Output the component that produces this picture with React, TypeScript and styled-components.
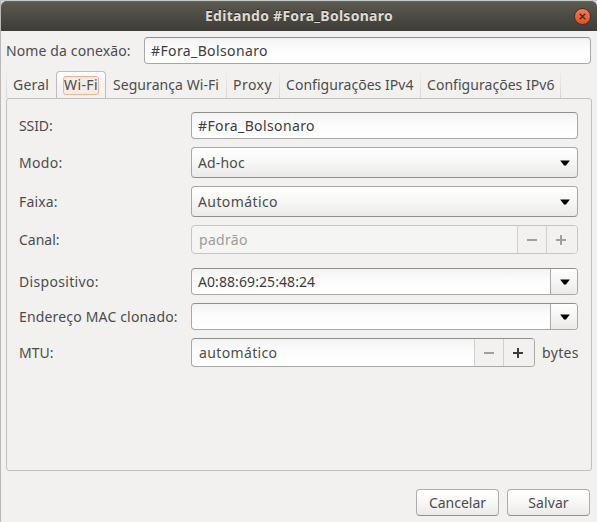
import React from 'react';
import styled, { createGlobalStyle, css } from 'styled-components';

const GlobalStyle = createGlobalStyle`
  *, *::before, *::after { box-sizing: border-box; }
  body { margin: 0; background: #d5d9d7; overflow: hidden; }
`;

const Window = styled.div`
  width: 597px;
  height: 522px;
  display: flex;
  flex-direction: column;
  border-top: 1px solid #c3c9c8;
  border-left: 1px solid #bab9b8;
  background: #f2f1f0;
  color: #4c4c4c;
  font: 14px/20px 'Noto Sans', 'Open Sans', sans-serif;
  cursor: default;
  user-select: none;
`;

const TitleStrip = styled.div`
  height: 30px;
  flex: none;
  background: #d5d9d7;
`;

const TitleBar = styled.header`
  height: 30px;
  display: grid;
  grid-template-columns: 23px 1fr 21px;
  align-items: center;
  padding-right: 4px;
  border-radius: 6px 6px 0 0;
  background: linear-gradient(#5c5a50, #3d3c37);
  box-shadow: inset 0 1px 0 #68675c;
  color: #dfdbd2;
  text-shadow: 0 -1px 0 rgba(0, 0, 0, 0.5);
`;

const Title = styled.h1`
  margin: 0;
  padding-left: 2px;
  font-size: 14px;
  font-weight: 700;
  line-height: 20px;
  letter-spacing: 0.27px;
  text-align: center;
`;

const CloseButton = styled.button`
  width: 17px;
  height: 17px;
  margin: 1px 0 0 2px;
  padding: 0;
  display: grid;
  place-items: center;
  border: 1px solid #37342e;
  border-radius: 50%;
  background: linear-gradient(#f47b54, #e2501f);
`;

const Text = styled.span<{ $spacing?: number }>`
  white-space: nowrap;
  letter-spacing: ${({ $spacing = 0 }) => $spacing}px;
`;

const NameRow = styled.div`
  display: grid;
  grid-template-columns: 138px 447px;
  align-items: center;
  padding: 6px 0 0 5px;
`;

const fieldFrame = css`
  height: 27px;
  display: flex;
  align-items: center;
  border: 1px solid #a9a8a7;
  border-top-color: #8f8f8e;
  border-radius: 4px;
  background: linear-gradient(#f3f3f3, #fcfcfc 45%, #ffffff);
`;

const Entry = styled.div`
  ${fieldFrame}
  padding: 0 6px;
  color: #3c3c3c;
`;

const Tabs = styled.nav`
  height: 27px;
  flex: none;
  display: flex;
  margin: 7px 0 0 5px;
`;

const Tab = styled.div<{ $width: number; $inset?: number; $active?: boolean }>`
  width: ${({ $width }) => $width}px;
  display: flex;
  align-items: center;
  padding-left: ${({ $inset = 6 }) => $inset}px;
  border: 0 solid transparent;
  border-right: 1px solid;
  border-image: linear-gradient(#f2f1f0, #d3d2d0) 1;
  ${({ $active }) =>
    $active &&
    css`
      border: 1px solid #bfbdba;
      border-image: none;
      border-bottom: 0;
      border-radius: 4px 4px 0 0;
      background: linear-gradient(#ffffff, #f4f3f2 60%, #f2f1f0);
    `}
  &:first-child {
    border-right: 0;
    border-left: 1px solid;
  }
`;

const FocusRing = styled.span`
  height: 19px;
  width: 36px;
  display: flex;
  align-items: center;
  border: 1px solid #f3b499;
  border-radius: 3px;
  background: #f5ebe7;
`;

const Panel = styled.main`
  width: 586px;
  height: 373px;
  flex: none;
  margin-left: 5px;
  padding: 13px 0 0 12px;
  border: 1px solid #c2c0bd;
  border-radius: 3px;
`;

const FormRow = styled.div<{ $gap?: number }>`
  display: grid;
  grid-template-columns: 172px 387px;
  align-items: center;
  margin-top: ${({ $gap = 0 }) => $gap}px;
`;

const Select = styled.div`
  height: 31px;
  display: flex;
  align-items: center;
  justify-content: space-between;
  padding: 0 7px 0 6px;
  border: 1px solid #a9a8a7;
  border-bottom-color: #8f8e8d;
  border-radius: 4px;
  background: linear-gradient(#ffffff, #f8f8f7 45%, #ebeae8);
`;

const Combo = styled.div`
  ${fieldFrame}
  justify-content: space-between;
  padding-left: 6px;
  color: #3c3c3c;
`;

const ComboButton = styled.div`
  width: 27px;
  height: 25px;
  display: flex;
  align-items: center;
  padding-left: 9px;
  border-left: 1px solid #aaa9a8;
  border-radius: 0 3px 3px 0;
  background: linear-gradient(#ffffff, #f5f5f4 50%, #ebeae8);
`;

const Spin = styled.div<{ $disabled?: boolean }>`
  ${fieldFrame}
  height: 29px;
  padding-left: 7px;
  justify-content: space-between;
  ${({ $disabled }) =>
    $disabled &&
    css`
      border-color: #c6c5c3;
      background: #f5f5f4;
      color: #a09c98;
    `}
`;

const SpinGroup = styled.div`
  display: grid;
  grid-template-columns: 344px auto;
  align-items: center;
  column-gap: 7px;
`;

const StepButtons = styled.div`
  height: 27px;
  display: grid;
  grid-template-columns: 29px 31px;
  border-radius: 0 3px 3px 0;
  background: #f2f1f0;
`;

const Step = styled.div<{ $muted?: boolean }>`
  display: flex;
  align-items: center;
  padding-left: 9px;
  border-left: 1px solid #d1d0ce;
  color: ${({ $muted }) => ($muted ? '#a39e99' : '#3c3c3c')};
`;

const Actions = styled.footer`
  display: flex;
  justify-content: flex-end;
  gap: 8px;
  padding: 18px 7px 0 0;
`;

const Button = styled.button`
  width: 83px;
  height: 27px;
  padding: 0;
  border: 1px solid #aeadab;
  border-bottom-color: #929190;
  border-radius: 4px;
  background: linear-gradient(#ffffff, #f8f8f7 45%, #ebeae8);
  color: inherit;
  font: inherit;
`;

const Arrow = () => (
  <svg width="10" height="6" viewBox="0 0 10 6">
    <path d="M0.2 0.4H9.8L6.2 5.2Q5 6.1 3.8 5.2Z" fill="#000" />
  </svg>
);

const Minus = () => (
  <svg width="10" height="10" viewBox="0 0 10 10">
    <path d="M0 4h10v2H0z" fill="currentColor" />
  </svg>
);

const Plus = () => (
  <svg width="10" height="10" viewBox="0 0 10 10">
    <path d="M4 0h2v4h4v2H6v4H4V6H0V4h4z" fill="currentColor" />
  </svg>
);

const Stepper = ({ disabled }: { disabled?: boolean }) => (
  <StepButtons>
    <Step $muted><Minus /></Step>
    <Step $muted={disabled}><Plus /></Step>
  </StepButtons>
);

export default function App() {
  return (
    <>
      <GlobalStyle />
      <Window>
        <TitleStrip>
          <TitleBar>
            <span />
            <Title>Editando #Fora_Bolsonaro</Title>
            <CloseButton aria-label="Fechar">
              <svg width="7" height="7" viewBox="0 0 7 7">
                <path d="M0.7 0.7 6.3 6.3M6.3 0.7 0.7 6.3" stroke="#42291f" strokeWidth="1.3" />
              </svg>
            </CloseButton>
          </TitleBar>
        </TitleStrip>

        <NameRow>
          <Text $spacing={0.12}>Nome da conexão:</Text>
          <Entry><Text $spacing={0.38}>#Fora_Bolsonaro</Text></Entry>
        </NameRow>

        <Tabs>
          <Tab $width={50}><Text $spacing={0.2}>Geral</Text></Tab>
          <Tab $width={50} $active>
            <FocusRing><Text $spacing={0.4}>Wi-Fi</Text></FocusRing>
          </Tab>
          <Tab $width={121} $inset={7}><Text $spacing={0.06}>Segurança Wi-Fi</Text></Tab>
          <Tab $width={53}><Text $spacing={0.48}>Proxy</Text></Tab>
          <Tab $width={141}><Text $spacing={0.04}>Configurações IPv4</Text></Tab>
          <Tab $width={140}><Text $spacing={0.04}>Configurações IPv6</Text></Tab>
        </Tabs>

        <Panel>
          <FormRow>
            <Text $spacing={-0.1}>SSID:</Text>
            <Entry><Text $spacing={0.38}>#Fora_Bolsonaro</Text></Entry>
          </FormRow>
          <FormRow $gap={8}>
            <Text $spacing={0.3}>Modo:</Text>
            <Select><Text $spacing={0.15}>Ad-hoc</Text><Arrow /></Select>
          </FormRow>
          <FormRow $gap={8}>
            <Text $spacing={0.15}>Faixa:</Text>
            <Select><Text $spacing={0.4}>Automático</Text><Arrow /></Select>
          </FormRow>
          <FormRow $gap={8}>
            <Text>Canal:</Text>
            <Spin $disabled><Text $spacing={0.3}>padrão</Text><Stepper disabled /></Spin>
          </FormRow>
          <FormRow $gap={14}>
            <Text $spacing={0.32}>Dispositivo:</Text>
            <Combo><Text $spacing={0.08}>A0:88:69:25:48:24</Text><ComboButton><Arrow /></ComboButton></Combo>
          </FormRow>
          <FormRow $gap={8}>
            <Text $spacing={0.17}>Endereço MAC clonado:</Text>
            <Combo><span /><ComboButton><Arrow /></ComboButton></Combo>
          </FormRow>
          <FormRow $gap={8}>
            <Text>MTU:</Text>
            <SpinGroup>
              <Spin><Text $spacing={0.36}>automático</Text><Stepper /></Spin>
              <Text $spacing={0.35}>bytes</Text>
            </SpinGroup>
          </FormRow>
        </Panel>

        <Actions>
          <Button><Text>Cancelar</Text></Button>
          <Button><Text $spacing={0.1}>Salvar</Text></Button>
        </Actions>
      </Window>
    </>
  );
}
